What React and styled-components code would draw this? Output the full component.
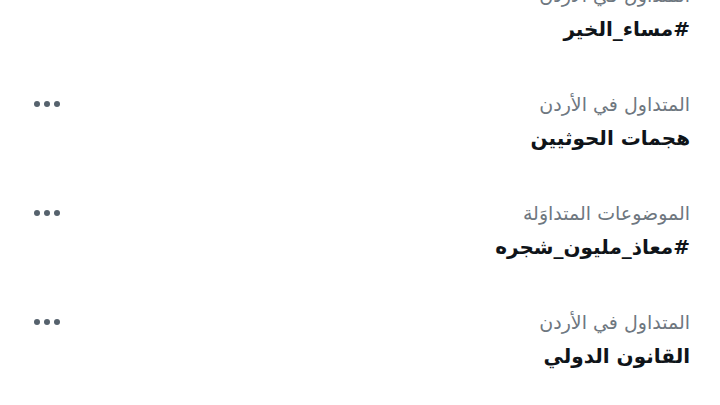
import React from 'react';
import styled, { createGlobalStyle } from 'styled-components';

const GlobalStyle = createGlobalStyle`
  html, body {
    margin: 0;
    padding: 0;
    background: #ffffff;
    overflow: hidden;
  }
`;

const TrendList = styled.div`
  direction: rtl;
  width: 720px;
  height: 405px;
  overflow: hidden;
  font-family: "DejaVu Sans", "Noto Sans", sans-serif;
`;

// list is scrolled a little, so the first trend sits partly above the top
const Scroller = styled.div`
  margin-top: -41px;
`;

const Trend = styled.div`
  height: 109px;
  box-sizing: border-box;
  padding: 25px 30px 0 34px;
`;

const Header = styled.div`
  display: flex;
  align-items: center;
  justify-content: space-between;
  height: 22px;
`;

const Context = styled.span`
  font-size: 19px;
  line-height: 22px;
  color: #6e7780;
`;

const Title = styled.div`
  margin-top: 9px;
  font-size: 20px;
  line-height: 28px;
  font-weight: 700;
  color: #0f1419;
`;

const More = styled.div`
  display: flex;
  gap: 4px;
`;

const Dot = styled.span`
  width: 6px;
  height: 6px;
  border-radius: 50%;
  background: #56626d;
`;

const trends = [
  { id: 1, context: 'المتداول في الأردن', title: '#مساء_الخير' },
  { id: 2, context: 'المتداول في الأردن', title: 'هجمات الحوثيين' },
  { id: 3, context: 'الموضوعات المتداوَلة', title: '#معاذ_مليون_شجره' },
  { id: 4, context: 'المتداول في الأردن', title: 'القانون الدولي' },
];

const App = () => {
  return (
    <>
      <GlobalStyle />
      <TrendList>
        <Scroller>
          {trends.map(trend => (
            <Trend key={trend.id}>
              <Header>
                <Context>{trend.context}</Context>
                <More>
                  <Dot />
                  <Dot />
                  <Dot />
                </More>
              </Header>
              <Title>{trend.title}</Title>
            </Trend>
          ))}
        </Scroller>
      </TrendList>
    </>
  );
};

export default App;
